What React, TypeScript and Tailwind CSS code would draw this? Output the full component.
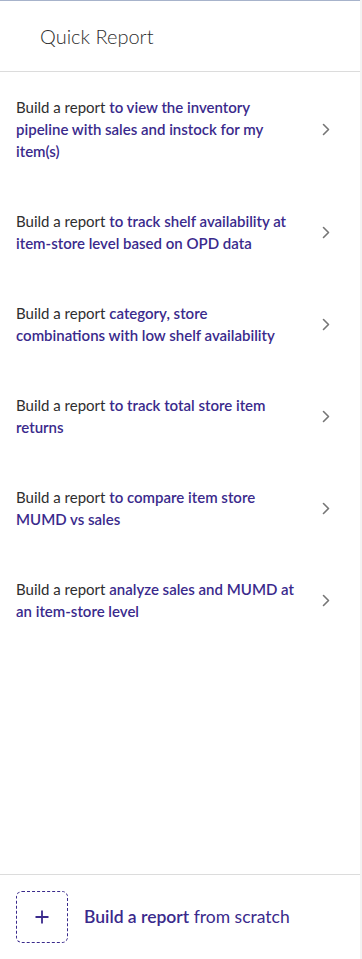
import React from "react";

// each item: first line starts with the grey "Build a report", rest is purple
const items: string[][] = [
  ["to view the inventory", "pipeline with sales and instock for my", "item(s)"],
  ["to track shelf availability at", "item-store level based on OPD data"],
  ["category, store", "combinations with low shelf availability"],
  ["to track total store item", "returns"],
  ["to compare item store", "MUMD vs sales"],
  ["analyze sales and MUMD at", "an item-store level"],
];

const Chevron = () => (
  <svg width="8" height="13" viewBox="0 0 8 13" fill="none">
    <path d="M1.5 1.5L6.5 6.5L1.5 11.5" stroke="#767676" strokeWidth="1.6" strokeLinecap="round" strokeLinejoin="round" />
  </svg>
);

export default function App() {
  return (
    <div
      className="flex h-[959px] w-[362px] bg-white"
      style={{ fontFamily: "Lato, 'Open Sans', sans-serif" }}
    >
      <div className="flex w-[360px] flex-col border-t border-[#a7b3cb]">
        <div className="flex h-[71px] items-center border-b border-[#dcdcdc] pl-10">
          <h2 className="text-[20px] font-light text-[#2e2e2e]">Quick Report</h2>
        </div>

        <div className="flex-1">
          {items.map((lines, i) => (
            <div key={i} className="flex items-center py-6 pl-4 pr-[30px]">
              <div className="text-[15px] leading-[22px] whitespace-nowrap">
                {lines.map((line, j) => (
                  <div key={j}>
                    {j === 0 && <span className="text-[#2e2e2e]">Build a report </span>}
                    <span className="font-semibold text-[#3a2a8c]">{line}</span>
                  </div>
                ))}
              </div>
              <div className="ml-auto flex items-center">
                <Chevron />
              </div>
            </div>
          ))}
        </div>

        <div className="flex items-center gap-4 border-t border-[#dcdcdc] px-4 py-4">
          <div className="flex h-[52px] w-[52px] items-center justify-center rounded-[6px] border border-dashed border-[#3a2a8c]">
            <svg width="16" height="16" viewBox="0 0 16 16">
              <path d="M8 1.5V14.5M1.5 8H14.5" stroke="#3a2a8c" strokeWidth="1.8" />
            </svg>
          </div>
          <p className="text-[17.5px] text-[#3a2a8c]">
            <span className="font-semibold">Build a report</span> from scratch
          </p>
        </div>
      </div>
      <div className="w-[2px] bg-[#f3f3f3]" />
    </div>
  );
}
